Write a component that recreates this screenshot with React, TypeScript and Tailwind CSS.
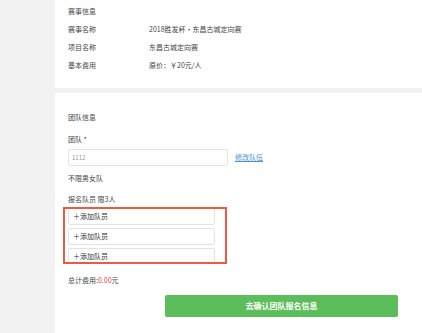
import React from "react";

const font = { fontFamily: '"Noto Sans CJK SC", "Noto Sans", sans-serif' };

export default function App() {
  const rows: [string, React.ReactNode][] = [
    ["赛事信息", ""],
    ["赛事名称", "2018胜发杯・东昌古城定向赛"],
    ["项目名称", "东昌古城定向赛"],
    ["基本费用", "原价：￥20元/人"],
  ];
  return (
    <div
      className="flex w-[422px] h-[333px] overflow-hidden bg-[#f2f2f2] text-[7px] text-[#444]"
      style={font}
    >
      <div className="w-[55px] shrink-0 bg-[#f2f2f2]" />
      <div className="flex flex-1 flex-col gap-[5px]">
        <div className="h-[88px] bg-white pt-[2px] pl-[13px]">
          {rows.map(([l, v], i) => (
            <div key={i} className="flex h-[18px] items-center">
              <div className="w-[81px]">{l}</div>
              <div>{v}</div>
            </div>
          ))}
        </div>
        <div className="flex-1 bg-white pl-[13px]">
          <div className="mt-[18px] leading-[12px]">团队信息</div>
          <div className="mt-[10px] leading-[12px]">团队 *</div>
          <div className="mt-[4px] flex items-center">
            <div className="flex h-[17px] w-[160px] items-center rounded-[2px] border border-[#e3e3e3] pl-[3px] text-[6px] text-[#999]">
              1112
            </div>
            <span className="ml-[7px] text-[#4a90e2] underline">修改队伍</span>
          </div>
          <div className="mt-[6px] leading-[12px]">不限男女队</div>
          <div className="mt-[9px] leading-[12px]">报名队员 限3人</div>
          <div className="relative mt-[3px] w-[147px]">
            <div className="flex h-[56px] flex-col gap-[3px] overflow-hidden">
              {[0, 1, 2].map((i) => (
                <div
                  key={i}
                  className="flex h-[17px] shrink-0 items-center rounded-[2px] border border-[#e3e3e3] pl-[4px] text-[#333]"
                >
                  ＋添加队员
                </div>
              ))}
            </div>
            <div className="absolute left-[-5px] top-[-1px] h-[57px] w-[164px] border-2 border-[#ec5a43]" />
          </div>
          <div className="mt-[10px] leading-[12px]">
            总计费用:<span className="text-[#e8413a]">0.00</span>元
          </div>
          <div className="mt-[9px] ml-[97px] flex h-[22px] w-[233px] items-center justify-center rounded-[2px] bg-[#5cbd5b] text-[8px] font-semibold text-white">
            去确认团队报名信息
          </div>
        </div>
      </div>
    </div>
  );
}
